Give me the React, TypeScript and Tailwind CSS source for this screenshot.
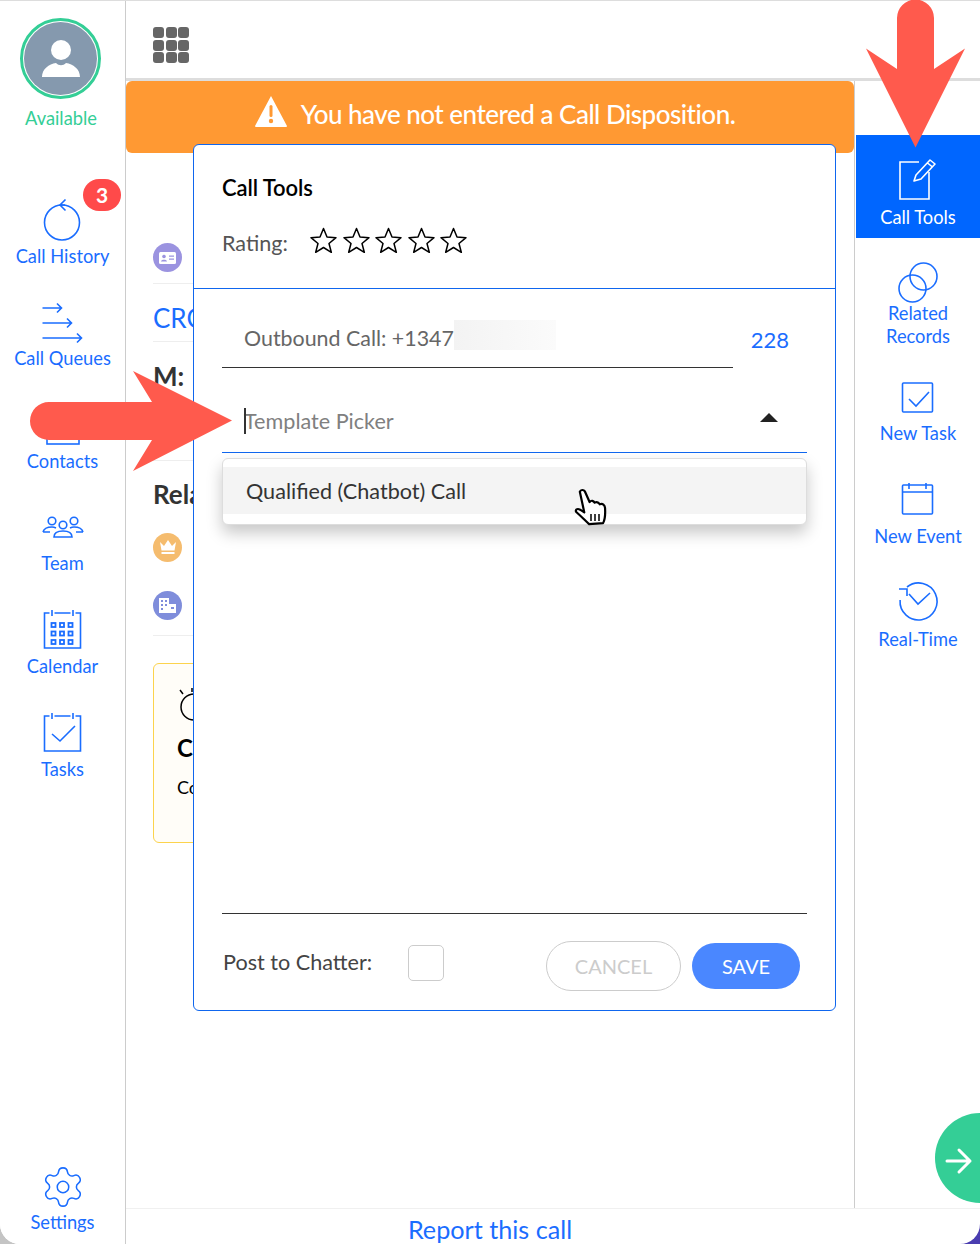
import type { ReactNode } from "react";
import { Settings } from "lucide-react";

function Icon({ children, w = 44, h = 46 }: { children: ReactNode; w?: number; h?: number }) {
  return (
    <svg width={w} height={h} viewBox={`0 0 ${w} ${h}`} fill="none" stroke="currentColor" strokeWidth="1.6" className="overflow-visible">
      {children}
    </svg>
  );
}

function NavItem({ icon, label }: { icon: ReactNode; label: ReactNode }) {
  return (
    <div className="flex flex-col items-center text-[18.3px] leading-[23px] text-[#1a6dff]">
      {icon}
      <div className="text-center">{label}</div>
    </div>
  );
}

const leftNav = [
  {
    label: "Call History",
    h: "h-[102px]",
    icon: (
      <Icon>
        <circle cx="21" cy="23.500" r="17.500" />
        <path d="M19 6 L24 6 M24.500 0.500 L19 6 L24.500 11.500" />
      </Icon>
    ),
  },
  {
    label: "Call Queues",
    h: "h-[103px]",
    icon: (
      <Icon>
        <path d="M1.500 7 H20 M16 2.500 L20.500 7 L16 11.500" />
        <path d="M1.500 22 H30 M26 17.500 L30.500 22 L26 26.500" />
        <path d="M1.500 37 H40 M36 32.500 L40.500 37 L36 41.500" />
      </Icon>
    ),
  },
  {
    label: "Contacts",
    h: "h-[102px]",
    icon: (
      <Icon>
        <rect x="6" y="4" width="32" height="36" />
      </Icon>
    ),
  },
  {
    label: "Team",
    h: "h-[103px]",
    icon: (
      <Icon>
        <circle cx="11" cy="15" r="3.800" />
        <circle cx="22" cy="19" r="3.800" />
        <circle cx="33" cy="15" r="3.800" />
        <path d="M2 26 C3 22 7 21 11 21 C13 21 14 21.500 15 22 M42 26 C41 22 37 21 33 21 C31 21 30 21.500 29 22 M2 26 H9 M35 26 H42" />
        <path d="M13 31 C13 26 18 25 22 25 C26 25 31 26 31 31 Z" />
      </Icon>
    ),
  },
  {
    label: "Calendar",
    h: "h-[103px]",
    icon: (
      <Icon>
        <g transform="translate(-1.500 -4)">
          <path d="M10 8 H5 V43 H41 V8 H36 M15 8 H31" />
          <path d="M12.500 5 V11 M33.500 5 V11" />
          <g strokeWidth="1.800">
            {[18, 26.500, 35].flatMap((y) =>
              [12, 20.500, 29].map((x) => <rect key={`${x}-${y}`} x={x} y={y} width="4" height="4" />)
            )}
          </g>
        </g>
      </Icon>
    ),
  },
  {
    label: "Tasks",
    h: "h-[103px]",
    icon: (
      <Icon>
        <g transform="translate(-1.500 -4)">
          <path d="M10 8 H5 V43 H41 V8 H36 M15 8 H31" />
          <path d="M12.500 5 V11 M33.500 5 V11" />
          <path d="M12.500 26 L20.500 33 L35.500 18" />
        </g>
      </Icon>
    ),
  },
];

function LeftSidebar() {
  return (
    <aside className="flex h-full w-[126px] shrink-0 flex-col items-center border-r border-[#cccccc] bg-white">
      <div className="mr-[4px] mt-[17px] flex h-[81px] w-[81px] items-center justify-center rounded-full border-[3px] border-[#34ce96] p-px">
        <div className="flex h-full w-full items-end justify-center rounded-full bg-[#8599ae]">
          <svg width="40" height="40" viewBox="0 0 40 40" fill="white" className="mb-[16px]">
            <circle cx="20" cy="11" r="10" />
            <path d="M1 38 C1 30 8 25 15 24 C18 27 22 27 25 24 C32 25 39 30 39 38 Z" />
          </svg>
        </div>
      </div>
      <div className="mr-[3px] mt-[8px] text-[18.3px] leading-[23px] text-[#34ce96]">Available</div>
      <div className="mt-[69px] flex w-full flex-col">
        {leftNav.map((item) => (
          <div key={item.label} className={`relative ${item.h}`}>
            <NavItem icon={item.icon} label={item.label} />
            {item.label === "Call History" ? (
              <span className="absolute left-[83px] top-[-20px] flex h-[32px] w-[38px] items-center justify-center rounded-full bg-[#ff4a4a] text-[21px] font-bold text-white">
                3
              </span>
            ) : null}
          </div>
        ))}
      </div>
      <div className="mt-auto pb-[10px]">
        <NavItem label="Settings" icon={<Settings size={46} strokeWidth={0.8} className="mb-[1px] mt-[-5px]" />} />
      </div>
    </aside>
  );
}

function BehindModal() {
  return (
    <div className="w-[600px] pl-[27px] pt-[90px] text-[#333333]">
      <div className="h-[41px] border-b border-[#eeeeee]">
        <span className="flex h-[29px] w-[29px] items-center justify-center rounded-full bg-[#9b93e0]">
          <svg width="17" height="12" viewBox="0 0 17 12" fill="white">
            <rect width="17" height="12" rx="1.500" />
            <circle cx="5" cy="4.500" r="1.800" fill="#9b93e0" />
            <path d="M2 9.500 C2 7 8 7 8 9.500 Z M10 3.500 H15 V4.800 H10 Z M10 6.500 H15 V7.800 H10 Z" fill="#9b93e0" />
          </svg>
        </span>
      </div>
      <div className="h-[58px] border-b border-[#eeeeee] pt-[18px] text-[26px] leading-[33px] text-[#1a6dff]">CRO</div>
      <div className="h-[119px] border-b border-[#eeeeee] pt-[18px] text-[26px] font-bold leading-[33px]">M:</div>
      <div className="mt-[17px] text-[26px] font-bold leading-[33px]">Related</div>
      <div className="mt-[22px] flex flex-col gap-[29px]">
        <span className="flex h-[29px] w-[29px] items-center justify-center rounded-full bg-[#f5bc6e]">
          <svg width="16" height="15" viewBox="0 0 16 15" fill="white">
            <path d="M0 2 L4 6 L8 0 L12 6 L16 2 L14.500 10.500 H1.500 Z" />
            <rect x="1.500" y="12" width="13" height="2" />
          </svg>
        </span>
        <span className="flex h-[29px] w-[29px] items-center justify-center rounded-full bg-[#7f8ddb]">
          <svg width="17" height="15" viewBox="0 0 17 15" fill="white">
            <rect width="10" height="15" />
            <rect x="10" y="6" width="7" height="9" />
            <g fill="#7f8ddb" stroke="none">
              <rect x="2" y="2" width="2" height="2" />
              <rect x="6" y="2" width="2" height="2" />
              <rect x="2" y="6" width="2" height="2" />
              <rect x="6" y="6" width="2" height="2" />
              <rect x="2" y="10" width="2" height="2" />
              <rect x="12" y="9" width="3" height="2" />
            </g>
          </svg>
        </span>
      </div>
      <div className="mt-[15px] border-t border-[#eeeeee]" />
      <div className="mt-[27px] h-[180px] rounded-[6px] border border-[#fcd34d] bg-[#fffdf8] pl-[23px] pt-[24px] text-black">
        <svg width="30" height="38" viewBox="0 0 30 38" fill="none" stroke="black" strokeWidth="1.500">
          <circle cx="17" cy="19" r="13" />
          <path d="M3 2 L6 6 M15 0 V4" />
        </svg>
        <div className="mt-[7px] text-[24px] font-bold leading-[30px]">Customer</div>
        <div className="mt-[13px] text-[18px] leading-[23px]">Continue</div>
      </div>
    </div>
  );
}

function Star() {
  return (
    <svg width="27" height="27" viewBox="0 0 27 27" fill="none" stroke="black" strokeWidth="1.500" strokeLinejoin="round">
      <path d="M13.500 1.500 L17 10 L26 10.700 L19 16.500 L21.300 25.300 L13.500 20.500 L5.700 25.300 L8 16.500 L1 10.700 L10 10 Z" />
    </svg>
  );
}

function CallToolsModal() {
  return (
    <div className="absolute left-[193px] top-[144px] z-10 flex h-[867px] w-[643px] flex-col rounded-[6px] border border-[#0f66ee] bg-white">
      <div className="h-[144px] shrink-0 border-b border-[#0f66ee] pl-[28px] pt-[29px]">
        <div className="text-[22px] font-semibold leading-[28px] tracking-[-0.1px] text-black">Call Tools</div>
        <div className="mt-[22px] flex items-center">
          <span className="mt-[5px] w-[88px] text-[21.6px] leading-[28px] text-[#555555]">Rating:</span>
          <div className="mb-[1px] flex gap-[5.500px]">
            <Star />
            <Star />
            <Star />
            <Star />
            <Star />
          </div>
        </div>
      </div>
      <div className="flex items-end pl-[28px] pr-[46px]">
        <div className="flex h-[79px] w-[512px] items-center border-b border-[#333333] pl-[22px] pt-[20px] text-[21.4px] text-[#666666]">
          <span>Outbound Call: +1347</span>
          <span className="mb-[6px] h-[30px] w-[102px] bg-gradient-to-r from-[#f3f3f3] to-[#fbfbfb]" />
        </div>
        <span className="mb-[14px] ml-[18px] text-[22px] leading-[28px] text-[#1a6dff]">228</span>
      </div>
      <div className="relative mx-[28px] flex h-[85px] items-center border-b border-[#0f66ee] pl-[22px] pt-[23px] text-[21.6px] text-[#808080]">
        <span className="absolute left-[22px] top-[40px] h-[26px] w-[1.500px] bg-[#333333]" />
        <span>Template Picker</span>
        <span className="mb-[8px] ml-auto mr-[29px] h-0 w-0 border-x-[9px] border-b-[9px] border-x-transparent border-b-[#222222]" />
      </div>
      <div className="mx-[28px] mt-[5px] h-[67px] rounded-[6px] border border-[#dddddd] bg-white py-[8px] shadow-[0_8px_16px_rgba(0,0,0,0.22)]">
        <div className="flex h-[47px] items-center bg-[#f4f4f4] pl-[23px] pt-[2px] text-[21.6px] text-[#333333]">Qualified (Chatbot) Call</div>
      </div>
      <div className="mx-[28px] mt-[388px] border-t border-[#333333]" />
      <div className="flex items-center pl-[29px] pr-[35px] pt-[21px]">
        <span className="mb-[2px] w-[185px] text-[21.6px] leading-[26px] text-[#444444]">Post to Chatter:</span>
        <span className="h-[36px] w-[36px] rounded-[5px] border border-[#cccccc]" />
        <button className="ml-[102px] mt-[6px] h-[50px] w-[135px] rounded-full border border-[#cccccc] text-[20px] text-[#cccccc]">CANCEL</button>
        <button className="ml-[11px] mt-[6px] h-[46px] w-[108px] rounded-full bg-[#4a87ff] text-[20px] text-white">SAVE</button>
      </div>
    </div>
  );
}

const rightNav = [
  {
    label: "Related Records",
    h: "h-[120px]",
    icon: (
      <Icon h={42}>
        <circle cx="27.500" cy="16.500" r="13.500" />
        <circle cx="16.500" cy="28.500" r="13.500" />
      </Icon>
    ),
  },
  {
    label: "New Task",
    h: "h-[103px]",
    icon: (
      <Icon h={42}>
        <rect x="6.500" y="3" width="30" height="29" rx="1" />
        <path d="M13 19 L20 26 L33 12" />
      </Icon>
    ),
  },
  {
    label: "New Event",
    h: "h-[103px]",
    icon: (
      <Icon h={42}>
        <rect x="6.500" y="2" width="30" height="29" rx="1" />
        <path d="M6.500 9 H36.500 M13 0 V6 M30 0 V6" />
      </Icon>
    ),
  },
  {
    label: "Real-Time",
    h: "h-[103px]",
    icon: (
      <Icon h={42}>
        <path d="M11 1 A18.500 18.500 0 1 1 4.100 14" />
        <path d="M3 3 H11 V10" />
        <path d="M13 8 L22 18 L34 7" />
      </Icon>
    ),
  },
];

function RightSidebar() {
  return (
    <aside className="flex w-[126px] shrink-0 flex-col border-l border-[#cccccc] pl-px pt-[54px]">
      <div className="flex h-[103px] flex-col items-center bg-[#0066ff] pt-[24px] text-[18.3px] leading-[23px] text-white">
        <svg width="38" height="42" viewBox="0 0 38 42" fill="none" stroke="white" strokeWidth="1.600" className="mb-[6px]">
          <path d="M20 3 H1 V40 H30 V13" />
          <path d="M15 22 L17 16 L31 1 L36 5 L22 20 Z M28.500 4 L33.500 8" strokeLinejoin="round" />
        </svg>
        <span className="mt-[-1px]">Call Tools</span>
      </div>
      <div className="mt-[22px] flex flex-col">
        {rightNav.map((item) => (
          <div key={item.label} className={item.h}>
            <NavItem icon={item.icon} label={item.label === "Related Records" ? <>Related<br />Records</> : item.label} />
          </div>
        ))}
      </div>
    </aside>
  );
}

export default function App() {
  return (
    <div className="relative h-[1244px] w-[980px] overflow-hidden bg-white font-['Lato','Carlito','Liberation_Sans',sans-serif]">
      {/* window corners showing through */}
      <span className="absolute bottom-0 left-0 h-[20px] w-[20px] bg-[#c4c4c4]" />
      <span className="absolute bottom-0 right-0 h-[20px] w-[20px] bg-[#4a3db0]" />
      <div className="relative flex h-[1244px] flex-col overflow-hidden rounded-b-[20px] border-t border-[#dddddd] bg-white">
        <div className="flex min-h-0 flex-1">
          <LeftSidebar />
          <div className="flex min-w-0 flex-1 flex-col">
            <div className="flex h-[80px] shrink-0 items-start border-b-[3px] border-[#dddddd] pl-[27px] pt-[26px]">
              <div className="grid grid-cols-3 gap-[1.500px]">
                {[1, 2, 3, 4, 5, 6, 7, 8, 9].map((n) => (
                  <span key={n} className="h-[11px] w-[11px] rounded-[3px] bg-[#666666]" />
                ))}
              </div>
            </div>
            <div className="flex min-h-0 flex-1">
              <main className="flex min-w-0 flex-1 flex-col">
                <div className="flex h-[72px] shrink-0 items-center justify-center rounded-[6px] bg-[#ff9933] pb-[5px] pl-[9px] text-[26px] font-medium tracking-[-0.5px] text-white">
                  <svg width="34" height="33" viewBox="0 0 34 33" className="mb-[6px] mr-[13px]">
                    <path d="M17 1 L33 31 Q33 32 32 32 H2 Q1 32 1 31 Z" fill="white" />
                    <rect x="15.500" y="10" width="3" height="12" rx="1.500" fill="#ff9933" />
                    <circle cx="17" cy="26" r="2.200" fill="#ff9933" />
                  </svg>
                  You have not entered a Call Disposition.
                </div>
                <BehindModal />
              </main>
              <RightSidebar />
            </div>
            <div className="flex h-[36px] shrink-0 items-center justify-center border-t border-[#f0f0f0] pr-[126px] pt-[4px] text-[25.2px] leading-[32px] text-[#1a6dff]">
              Report this call
            </div>
          </div>
        </div>
      </div>

      <CallToolsModal />

      {/* annotation arrows and cursor */}
      <svg className="absolute left-0 top-0 z-20" width="980" height="480" viewBox="0 0 980 480" fill="#ff5a4d">
        <path d="M897 18 A18.500 18.500 0 0 1 934 18 V69 L965 48.500 L915.500 147.500 L866 48.500 L897 69 Z" />
        <path d="M49 402 H152 L133 371 L232 420.500 L133 471 L152 440 H49 A19 19 0 0 1 49 402 Z" />
      </svg>
      <svg className="absolute left-[574px] top-[488px] z-20" width="34" height="39" viewBox="0 0 34 39" fill="white" stroke="black" strokeWidth="2.200" strokeLinejoin="round">
        <path d="M7 3 C8 1 11 1 12 3 L16 14 C18 12 20 13 21 15 C23 14 25 15 26 17 C29 16 31 18 31 21 C31 26 31 31 28 36 H14 C11 33 7 28 2 23 C1 21 3 19 6 21 L10 24 Z" transform="rotate(-4 16 20)" />
        <path d="M17 26 V33 M21 26 V33 M25 26 V33" fill="none" strokeWidth="1.500" />
      </svg>

      <div className="absolute left-[935px] top-[1113px] z-20 flex h-[90px] w-[90px] items-center rounded-full bg-[#34ce96] pl-[10px] pt-[6px] text-white">
        <svg width="28" height="28" viewBox="0 0 28 28" fill="none" stroke="white" strokeWidth="3" strokeLinecap="round" strokeLinejoin="round">
          <path d="M2 14 H25 M14 3 L25 14 L14 25" />
        </svg>
      </div>
    </div>
  );
}
